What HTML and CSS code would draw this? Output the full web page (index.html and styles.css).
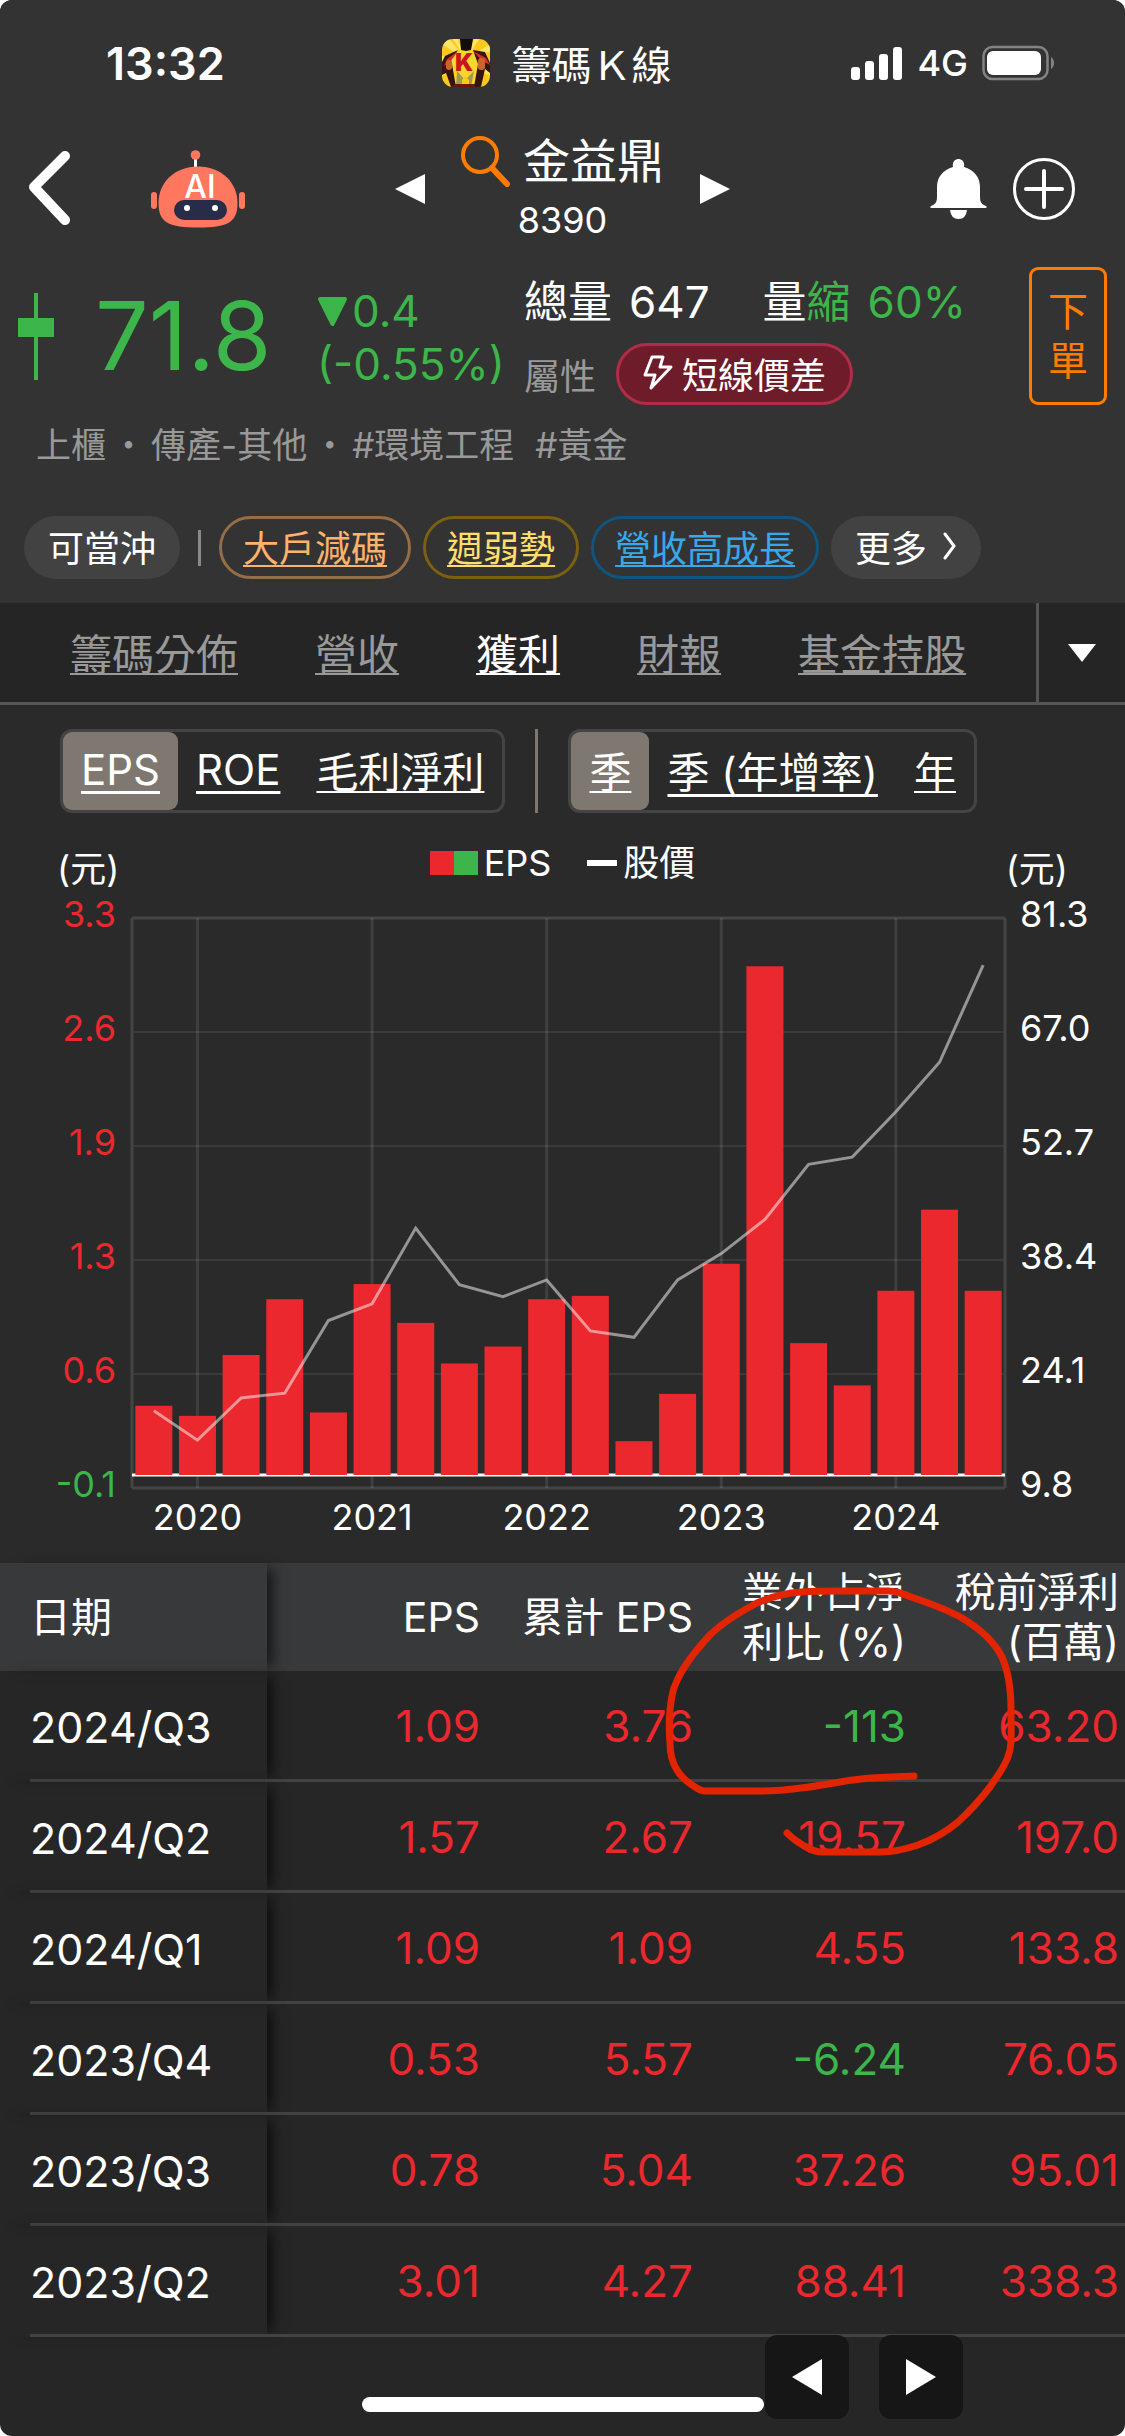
FILE: index.html
```html
<!DOCTYPE html>
<html lang="zh-Hant">
<head>
<meta charset="UTF-8">
<meta name="viewport" content="width=device-width, initial-scale=1.0">
<title>籌碼K線 - 金益鼎 8390</title>
<link rel="stylesheet" href="styles.css">
</head>
<body>
<div class="app">
    <header class="top">
        <div class="status-bar">
            <span class="time">13:32</span>
            <div class="app-name">
                <svg width="48" height="48" viewBox="0 0 48 48">
                    <defs><clipPath id="icon-clip"><rect width="48" height="48" rx="11"/></clipPath></defs>
                    <g clip-path="url(#icon-clip)">
                        <rect width="48" height="48" fill="#fbc81e"/>
                        <path d="M24 20L-2 4V-4H4ZM24 20L8-4H14ZM24 20L34-4H40ZM24 20L50 4V12ZM24 24L-2 16V22ZM24 24L-2 38V30ZM24 24L50 38V30Z" fill="#ffe566"/>
                        <path d="M15 12L24 10L33 12L38 26L31 48H14L9 26Z" fill="#fbd52c"/>
                        <path d="M15 32L23 41L32 32L29 48H14Z" fill="#a09a4c"/>
                        <path d="M20 41L23 37L27 41V48H20Z" fill="#fbc81e"/>
                        <path d="M18 0H31L29 11L24 12L19 11Z" fill="#120d0c"/>
                        <path d="M16 11L3 17L0 23V36L4 34L9 48H14L10 25L9 20ZM31 11L43 13L48 24V34L43 30L39 48H32L36 25Z" fill="#351512"/>
                        <path d="M16 12L5 20L2 27L8 23ZM31 12L44 19L48 26L40 22Z" fill="#d92c25"/>
                        <rect x="4" y="21" width="6" height="10" rx="3" fill="#c9642a"/>
                        <rect x="36" y="19" width="7" height="12" rx="3" fill="#c9642a"/>
                        <path d="M12 45H33V48H11Z" fill="#6b1616"/>
                        <text class="icon-k" x="22" y="32">K</text>
                    </g>
                </svg>
                <span>籌碼Ｋ線</span>
            </div>
            <div class="signal">
                <svg width="52" height="34" viewBox="0 0 52 34" fill="#fff">
                    <rect x="0" y="21" width="9" height="13" rx="3"/>
                    <rect x="14" y="15" width="9" height="19" rx="3"/>
                    <rect x="28" y="8" width="9" height="26" rx="3"/>
                    <rect x="42" y="1" width="9" height="33" rx="3"/>
                </svg>
                <span>4G</span>
                <svg width="73" height="36" viewBox="0 0 73 36">
                    <rect x="1.5" y="2" width="64" height="32" rx="9" fill="none" stroke="#838383" stroke-width="2.5"/>
                    <rect x="5" y="6" width="54" height="24" rx="6" fill="#fff"/>
                    <path d="M69 12Q72 14 72 18T69 24Z" fill="#838383"/>
                </svg>
            </div>
        </div>

        <nav class="nav">
            <div class="nav-left">
                <button class="icon-btn" aria-label="返回">
                    <svg width="41" height="76" viewBox="0 0 41 76"><path d="M36 5L5 36L36 69" fill="none" stroke="#fff" stroke-width="10" stroke-linecap="round" stroke-linejoin="round"/></svg>
                </button>
                <button class="icon-btn" aria-label="AI 助理">
                    <svg width="94" height="80" viewBox="0 0 94 80">
                        <path d="M44.500 8V20" stroke="#fff" stroke-width="3"/>
                        <circle cx="44.500" cy="6" r="4.800" fill="#ff775e"/>
                        <rect x="0" y="43" width="6" height="17" rx="3" fill="#ff775e"/>
                        <rect x="88" y="43" width="6" height="17" rx="3" fill="#ff775e"/>
                        <path d="M47 17.500C71 17.500 86.500 34 86.500 54C86.500 74 76 78.500 47 78.500S7.500 74 7.500 54C7.500 34 23 17.500 47 17.500Z" fill="#ff775e"/>
                        <text class="icon-ai" x="49" y="49">AI</text>
                        <rect x="23" y="51" width="53" height="20" rx="10" fill="#272c49"/>
                        <circle cx="36" cy="59" r="3" fill="#fff"/>
                        <circle cx="64" cy="59" r="3" fill="#fff"/>
                    </svg>
                </button>
            </div>
            <div class="nav-center">
                <button class="icon-btn" aria-label="上一檔"><svg width="30" height="30" viewBox="0 0 30 30"><path d="M30 0V30L0 15Z" fill="#fff"/></svg></button>
                <div class="title">
                    <h1>
                        <svg width="50" height="52" viewBox="0 0 50 52" fill="none" stroke="#ff7c00"><circle cx="19" cy="20" r="17" stroke-width="4"/><path d="M31 33L46 49" stroke-width="6" stroke-linecap="round"/></svg>
                        金益鼎
                    </h1>
                    <p>8390</p>
                </div>
                <button class="icon-btn" aria-label="下一檔"><svg width="30" height="30" viewBox="0 0 30 30"><path d="M0 0V30L30 15Z" fill="#fff"/></svg></button>
            </div>
            <div class="nav-right">
                <button class="icon-btn" aria-label="通知">
                    <svg width="57" height="60" viewBox="0 0 57 60" fill="#fff">
                        <path d="M23 8C22 3 25 0 28.500 0S35 3 34 8C44 11 50 18 50 28V37C50 43 51 45 56 47Q58 49 55 49H2Q-1 49 1 47C6 45 7 43 7 37V28C7 18 13 11 23 8Z"/>
                        <path d="M20 51H37Q36 60 28.500 60T20 51Z"/>
                    </svg>
                </button>
                <button class="icon-btn" aria-label="加入自選">
                    <svg width="62" height="62" viewBox="0 0 62 62" fill="none" stroke="#fff"><circle cx="31" cy="31" r="29.500" stroke-width="3"/><path d="M31 13V49M13 31H49" stroke-width="4" stroke-linecap="round"/></svg>
                </button>
            </div>
        </nav>

        <section class="quote">
            <svg width="36" height="87" viewBox="0 0 36 87" fill="#3cb54a"><rect x="16" width="4" height="87"/><rect y="25" width="36" height="19"/></svg>
            <span class="price">71.8</span>
            <div class="change">
                <span><svg width="31" height="31" viewBox="0 0 31 31"><path d="M3 3H28L15.500 28Z" fill="#3cb54a" stroke="#3cb54a" stroke-width="4" stroke-linejoin="round"/></svg>0.4</span>
                <span>(-0.55%)</span>
            </div>
            <div class="stats">
                <div class="volume">
                    <span>總量</span>
                    <span>647</span>
                    <span class="shrink">量<b>縮</b></span>
                    <b>60%</b>
                </div>
                <div class="attr">
                    <span>屬性</span>
                    <button class="attr-pill">
                        <svg width="30" height="36" viewBox="0 0 30 36"><path d="M9 2H20L17 12H28L8 33L12 20H2Z" fill="none" stroke="#fff" stroke-width="3" stroke-linejoin="round"/></svg>
                        短線價差
                    </button>
                </div>
            </div>
            <button class="order-btn"><span>下</span><span>單</span></button>
        </section>

        <div class="tags">
            <span>上櫃</span><span>・</span><span>傳產-其他</span><span>・</span><span>#環境工程</span><span class="tag-next">#黃金</span>
        </div>

        <div class="chips">
            <span class="chip">可當沖</span>
            <i class="chip-divider"></i>
            <a class="chip chip-orange" href="#">大戶減碼</a>
            <a class="chip chip-yellow" href="#">週弱勢</a>
            <a class="chip chip-blue" href="#">營收高成長</a>
            <button class="chip chip-more">更多<svg width="14" height="28" viewBox="0 0 14 28"><path d="M2 2L11 14L2 26" fill="none" stroke="#fff" stroke-width="3" stroke-linecap="round"/></svg></button>
        </div>
    </header>

    <div class="tabs">
        <div class="tab-list">
            <a href="#">籌碼分佈</a>
            <a href="#">營收</a>
            <a href="#" class="active">獲利</a>
            <a href="#">財報</a>
            <a href="#">基金持股</a>
        </div>
        <button class="tab-more" aria-label="更多分頁"><svg width="28" height="18" viewBox="0 0 28 18"><path d="M0 0H28L14 18Z" fill="#fff"/></svg></button>
    </div>

    <main>
        <div class="switches">
            <div class="segment">
                <a href="#" class="latin on">EPS</a>
                <a href="#" class="latin">ROE</a>
                <a href="#">毛利淨利</a>
            </div>
            <i class="switch-divider"></i>
            <div class="segment">
                <a href="#" class="on">季</a>
                <a href="#" class="latin">季 (年增率)</a>
                <a href="#">年</a>
            </div>
        </div>

        <div class="legend">
            <span class="unit">(元)</span>
            <div class="legend-items">
                <span><i class="swatch"></i>EPS</span>
                <span><i class="dash"></i>股價</span>
            </div>
            <span class="unit">(元)</span>
        </div>
        <svg id="chart" class="chart" viewBox="0 0 1125 670"></svg>

        <div class="table-wrap">
            <table>
                <thead>
                    <tr>
                        <th class="date">日期</th>
                        <th>EPS</th>
                        <th>累計 EPS</th>
                        <th>業外占淨<br>利比 (%)</th>
                        <th>稅前淨利<br>(百萬)</th>
                    </tr>
                </thead>
                <tbody>
                    <tr><th class="date">2024/Q3</th><td>1.09</td><td>3.76</td><td class="down">-113</td><td>63.20</td></tr>
                    <tr><th class="date">2024/Q2</th><td>1.57</td><td>2.67</td><td>19.57</td><td>197.0</td></tr>
                    <tr><th class="date">2024/Q1</th><td>1.09</td><td>1.09</td><td>4.55</td><td>133.8</td></tr>
                    <tr><th class="date">2023/Q4</th><td>0.53</td><td>5.57</td><td class="down">-6.24</td><td>76.05</td></tr>
                    <tr><th class="date">2023/Q3</th><td>0.78</td><td>5.04</td><td>37.26</td><td>95.01</td></tr>
                    <tr><th class="date">2023/Q2</th><td>3.01</td><td>4.27</td><td>88.41</td><td>338.3</td></tr>
                </tbody>
            </table>
            <!-- pen mark -->
            <svg class="pen" width="1125" height="320" viewBox="0 0 1125 320">
                <path d="M914 213C896 214 880 214 861 216C840 218 822 223 801 225C787 227 774 228 761 228H705C701 228 698 226 695 224C687 219 681 214 677 207C672 199 670 190 670 180C669 168 669 158 670 147C671 137 672 128 676 120C683 103 696 87 710 72C723 59 740 49 757 40C771 34 786 30 801 29C815 28 828 28 841 28H888C896 28 904 31 911 34C929 40 946 46 962 55C977 64 994 78 1002 94C1009 110 1011 129 1011 147C1011 161 1012 175 1010 187C1007 201 998 212 990 224C980 237 970 248 958 259C946 269 932 277 918 282C906 286 893 289 881 289H821C816 289 812 287 808 285C800 281 793 276 787 270"/>
            </svg>
        </div>
    </main>

    <div class="home-indicator"></div>
    <div class="pager">
        <button aria-label="向左"><svg width="30" height="36" viewBox="0 0 30 36"><path d="M30 0V36L0 18Z" fill="#fff"/></svg></button>
        <button aria-label="向右"><svg width="30" height="36" viewBox="0 0 30 36"><path d="M0 0V36L30 18Z" fill="#fff"/></svg></button>
    </div>
</div>

<script>
    const eps = [0.41, 0.35, 0.71, 1.04, 0.37, 1.13, 0.90, 0.66, 0.76, 1.04, 1.06, 0.20, 0.48, 1.25, 3.01, 0.78, 0.53, 1.09, 1.57, 1.09];
    const prices = [19.5, 15.8, 21.1, 21.7, 30.8, 32.9, 42.4, 35.3, 33.8, 35.9, 29.5, 28.7, 35.9, 39.2, 43.5, 50.4, 51.3, 57.0, 63.2, 75.4];
    const leftLabels = ['3.3', '2.6', '1.9', '1.3', '0.6', '-0.1'];
    const rightLabels = ['81.3', '67.0', '52.7', '38.4', '24.1', '9.8'];
    const plot = { left: 132, right: 1005, top: 25, bottom: 595, zero: 582 };
    const step = (plot.right - plot.left) / eps.length;
    const barX = i => plot.left + step * (i + 0.5);
    let out = '';

    // Grid and axis labels
    for (let i = 0; i < 6; i++) {
        const y = plot.top + i * 114;
        const edge = i === 0 || i === 5;
        out += `<line class="${edge ? 'frame' : 'grid'}" x1="${plot.left}" y1="${y}" x2="${plot.right}" y2="${y}"/>`;
        out += `<text class="${i === 5 ? 'down' : 'up'}" x="116" y="${y + 9}" text-anchor="end">${leftLabels[i]}</text>`;
        out += `<text x="1020" y="${y + 9}">${rightLabels[i]}</text>`;
    }
    out += `<line class="frame" x1="${plot.left}" y1="${plot.top}" x2="${plot.left}" y2="${plot.bottom}"/>`;
    out += `<line class="frame" x1="${plot.right}" y1="${plot.top}" x2="${plot.right}" y2="${plot.bottom}"/>`;
    for (let i = 0; i < 5; i++) {
        const x = barX(1 + i * 4);
        out += `<line class="year" x1="${x}" y1="${plot.top}" x2="${x}" y2="${plot.bottom}"/>`;
        out += `<text x="${x}" y="637" text-anchor="middle">${2020 + i}</text>`;
    }

    // Zero line, bars and price line
    out += `<line class="zero" x1="${plot.left}" y1="${plot.zero}" x2="${plot.right}" y2="${plot.zero}"/>`;
    eps.forEach((value, i) => {
        const h = value * 169;
        out += `<rect class="bar" x="${barX(i) - 18.5}" y="${plot.zero - h}" width="37" height="${h}"/>`;
    });
    const points = prices.map((value, i) => `${barX(i)},${plot.bottom - (value - 9.8) / 71.5 * 570}`);
    out += `<polyline class="line" points="${points.join(' ')}"/>`;
    document.getElementById('chart').innerHTML = out;
</script>
</body>
</html>
```
FILE: styles.css
```css
* {
    box-sizing: border-box;
}

body {
    margin: 0;
    background-color: #fff;
    color: #fff;
    font-family: Inter, "Noto Sans CJK TC", sans-serif;
    font-size: 36px;
}

h1, p {
    margin: 0;
    font-weight: 400;
}

svg {
    display: block;
    flex: none;
}

a {
    color: inherit;
    text-decoration: underline;
    text-decoration-thickness: 2px;
    text-underline-offset: 3px;
}

button {
    background: none;
    border: none;
    padding: 0;
    margin: 0;
    color: inherit;
    font: inherit;
    cursor: pointer;
}

.app {
    position: relative;
    min-height: 100vh;
    background-color: #262626;
    border-radius: 12px;
    overflow: hidden;
}

.top {
    background-color: #333;
    padding-bottom: 24px;
}

/* Status bar */
.status-bar {
    display: grid;
    grid-template-columns: 1fr auto 1fr;
    align-items: center;
    height: 126px;
    padding: 0 70px 0 58px;
}

.time {
    padding-left: 48px;
    font-size: 45px;
    font-weight: 600;
}

.app-name {
    display: flex;
    align-items: center;
    gap: 22px;
    font-size: 40px;
}

.icon-k {
    font: 900 24px Inter, sans-serif;
    fill: #c9151e;
    text-anchor: middle;
}

.icon-ai {
    font: 500 32px Inter, sans-serif;
    fill: #fff;
    text-anchor: middle;
}

.signal {
    display: flex;
    align-items: center;
    justify-content: flex-end;
    gap: 14px;
    font-weight: 500;
}

/* Navigation */
.nav {
    display: grid;
    grid-template-columns: 1fr auto 1fr;
    align-items: center;
    padding: 0 29px;
    height: 125px;
}

.nav-left,
.nav-center,
.nav-right {
    display: flex;
    align-items: center;
}

.nav-left {
    gap: 81px;
}

.nav-center {
    gap: 36px;
}

.nav-right {
    gap: 26px;
    justify-content: flex-end;
    padding-right: 21px;
}

.title {
    text-align: center;
}

.title h1 {
    display: flex;
    align-items: center;
    gap: 12px;
    font-size: 47px;
    line-height: 62px;
}

.title p {
    line-height: 56px;
}

/* Quote */
.quote {
    display: grid;
    grid-template-columns: 36px 263px 207px 1fr 78px;
    align-items: center;
    margin-top: 16px;
    padding: 0 18px;
}

.price {
    padding-left: 41px;
    color: #3cb54a;
    font-size: 95px;
    line-height: 100px;
}

.change {
    padding-top: 3px;
    color: #3cb54a;
    font-size: 44px;
    line-height: 53px;
}

.change span {
    display: flex;
    align-items: center;
    gap: 4px;
}

.stats {
    display: grid;
    grid-template-rows: 64px 62px;
    row-gap: 12px;
    align-items: center;
    font-size: 44px;
}

.volume {
    display: flex;
    align-items: baseline;
    gap: 17px;
    white-space: nowrap;
}

.shrink {
    margin-left: 36px;
}

.volume b {
    color: #3cb54a;
    font-weight: 400;
}

.attr {
    display: flex;
    align-items: center;
    gap: 20px;
    color: #999;
    font-size: 36px;
}

.attr-pill {
    display: flex;
    align-items: center;
    gap: 9px;
    height: 62px;
    padding: 0 24px 2px;
    background-color: #6e1b2a;
    border: 3px solid #b02c48;
    border-radius: 31px;
    color: #fff;
}

.order-btn {
    display: flex;
    flex-direction: column;
    align-items: center;
    justify-content: center;
    height: 138px;
    border: 3px solid #ff7c00;
    border-radius: 9px;
    color: #ff7c00;
    font-size: 40px;
    line-height: 49px;
}

.tags {
    display: flex;
    gap: 5px;
    margin-top: 15px;
    padding-left: 36px;
    color: #999;
    font-size: 35px;
    line-height: 50px;
}

.tag-next {
    margin-left: 16px;
}

/* Chips */
.chips {
    display: flex;
    align-items: center;
    gap: 12px;
    margin-top: 46px;
    padding-left: 24px;
}

.chip {
    display: flex;
    align-items: center;
    height: 63px;
    padding: 0 24px 3px;
    background-color: #424242;
    border-radius: 32px;
}

.chip-orange,
.chip-yellow,
.chip-blue {
    padding: 0 21px 3px;
    background: none;
    border: 3px solid #956d48;
    color: #ffb26b;
}

.chip-yellow {
    border-color: #7a6010;
    color: #ffdf6b;
}

.chip-blue {
    border-color: #10547f;
    color: #38a8ec;
}

.chip-more {
    gap: 16px;
}

.chip-divider {
    width: 3px;
    height: 36px;
    margin: 0 6px;
    background-color: #8a8a8a;
}

/* Tabs */
.tabs {
    display: flex;
    height: 102px;
    background-color: #252525;
    border-bottom: 3px solid #555;
}

.tab-list {
    display: flex;
    flex: 1;
    align-items: center;
    gap: 77px;
    padding: 0 0 3px 70px;
    color: #999;
    font-size: 42px;
}

.tab-list .active {
    color: #fff;
}

.tab-more {
    display: flex;
    align-items: center;
    justify-content: center;
    width: 89px;
    border-left: 3px solid #555;
}

/* Switches */
main {
    background-color: #2a2a2a;
}

.switches {
    display: flex;
    gap: 30px;
    padding: 24px 60px 0;
    font-size: 42px;
}

.segment {
    display: flex;
    height: 84px;
    border: 3px solid #444;
    border-radius: 12px;
}

.segment a {
    display: flex;
    align-items: center;
    padding: 0 18px 3px;
    border-radius: 9px;
}

.segment .latin {
    text-decoration-thickness: 3px;
    text-underline-offset: 6px;
}

.segment .on {
    background-color: #7f7870;
}

.switch-divider {
    width: 3px;
    background-color: #7f7870;
}

/* Chart */
.legend {
    display: flex;
    justify-content: space-between;
    align-items: flex-end;
    height: 80px;
    padding: 0 57px;
    line-height: 48px;
}

.legend-items {
    display: flex;
    gap: 36px;
    padding-bottom: 6px;
}

.legend-items span {
    display: flex;
    align-items: center;
    gap: 6px;
}

.swatch {
    width: 48px;
    height: 24px;
    background: linear-gradient(90deg, #eb282d 50%, #3cb54a 50%);
}

.dash {
    width: 30px;
    height: 6px;
    background-color: #fff;
}

.chart {
    width: 100%;
    height: auto;
    fill: #fff;
    font-size: 36px;
}

.chart .up {
    fill: #eb282d;
}

.chart .down {
    fill: #3cb54a;
}

.grid {
    stroke: #3a3a3a;
    stroke-width: 2;
}

.year {
    stroke: #fff;
    stroke-opacity: 0.1;
    stroke-width: 3;
}

.frame {
    stroke: #444;
    stroke-width: 3;
}

.zero {
    stroke: #fff;
    stroke-width: 3;
}

.bar {
    fill: #eb282d;
}

.line {
    fill: none;
    stroke: #fff;
    stroke-opacity: 0.5;
    stroke-width: 3;
}

/* Table */
.table-wrap {
    position: relative;
    background-color: #262626;
}

table {
    width: 100%;
    table-layout: fixed;
    border-collapse: separate;
    border-spacing: 0;
}

th,
td {
    width: 213px;
    height: 111px;
    padding: 0;
    border-bottom: 3px solid #424242;
    font-size: 44px;
    font-weight: 400;
    text-align: right;
    white-space: nowrap;
}

th:last-child,
td:last-child {
    width: auto;
    padding-right: 6px;
}

td {
    padding-top: 2px;
    color: #eb282d;
}

td.down {
    color: #3cb54a;
}

thead {
    background-color: #38393b;
}

thead th {
    height: 108px;
    border-bottom: none;
    font-size: 41px;
    line-height: 50px;
}

th.date {
    width: 267px;
    padding-left: 30px;
    text-align: left;
    border-bottom: none;
    box-shadow: 12px 0 12px -6px rgba(0, 0, 0, 0.6);
}

tbody .date {
    background: linear-gradient(#424242, #424242) 30px 100% / 100% 3px no-repeat;
    font-size: 43px;
}

.pen {
    position: absolute;
    top: 0;
    left: 0;
    pointer-events: none;
}

.pen path {
    fill: none;
    stroke: #e32400;
    stroke-width: 7;
    stroke-linecap: round;
    stroke-linejoin: round;
}

/* Bottom overlays */
.home-indicator {
    position: absolute;
    bottom: 24px;
    left: 50%;
    width: 402px;
    height: 15px;
    margin-left: -201px;
    background-color: #fff;
    border-radius: 8px;
}

.pager {
    position: absolute;
    right: 162px;
    bottom: 17px;
    display: flex;
    gap: 30px;
}

.pager button {
    display: flex;
    align-items: center;
    justify-content: center;
    width: 84px;
    height: 84px;
    background-color: #161616;
    border-radius: 12px;
}
```
